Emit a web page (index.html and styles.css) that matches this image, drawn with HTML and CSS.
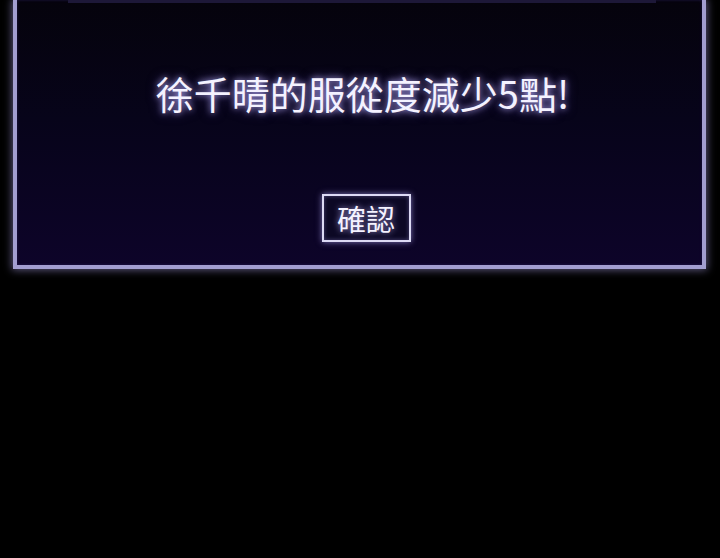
FILE: index.html
```html
<!DOCTYPE html>
<html lang="zh-Hant">
<head>
<meta charset="utf-8">
<title>通知</title>
<link rel="stylesheet" href="styles.css">
</head>
<body>
  <div class="dialog">
    <div class="dialog-rule"></div>
    <p class="dialog-message">徐千晴的服從度減少5點!</p>
    <button class="dialog-confirm" type="button">確認</button>
  </div>
</body>
</html>
```
FILE: styles.css
```css
html, body {
  margin: 0;
  padding: 0;
  background: #000;
  width: 720px;
  height: 558px;
  overflow: hidden;
}

body {
  font-family: "Noto Sans CJK TC", "Noto Sans", sans-serif;
}

/* dialog box: its top edge runs off the top of the viewport */
.dialog {
  box-sizing: border-box;
  width: 693px;
  height: 269px;
  margin-left: 13px;
  border: 4px solid #a29ed0;
  border-top: none;
  background: linear-gradient(180deg, #05030c 0%, #07041a 45%, #0d0429 100%);
  box-shadow: 0 0 8px 1px rgba(170, 160, 230, 0.55), inset 0 0 3px rgba(40, 30, 90, 0.8);
  display: flex;
  flex-direction: column;
  align-items: center;
}

.dialog-rule {
  align-self: stretch;
  margin: 0 46px 0 51px;
  height: 3px;
  background: #1d1838;
}

.dialog-message {
  margin: 66px 0 0 6px;
  color: #f4f2ff;
  font-size: 38px;
  line-height: 48px;
  text-shadow: 0 0 6px rgba(190, 180, 255, 0.85), 0 0 12px rgba(140, 120, 240, 0.5);
}

.dialog-confirm {
  margin-top: 77px;
  margin-left: 13px;
  box-sizing: border-box;
  width: 89px;
  height: 48px;
  padding: 0;
  border: 2px solid #dcdaf4;
  background: #0c0824;
  color: #f4f2ff;
  font-family: inherit;
  font-size: 29px;
  line-height: 1;
  text-shadow: 0 0 6px rgba(190, 180, 255, 0.8);
  box-shadow: 0 0 6px rgba(170, 160, 240, 0.7), inset 0 0 4px rgba(170, 160, 240, 0.4);
}
```
